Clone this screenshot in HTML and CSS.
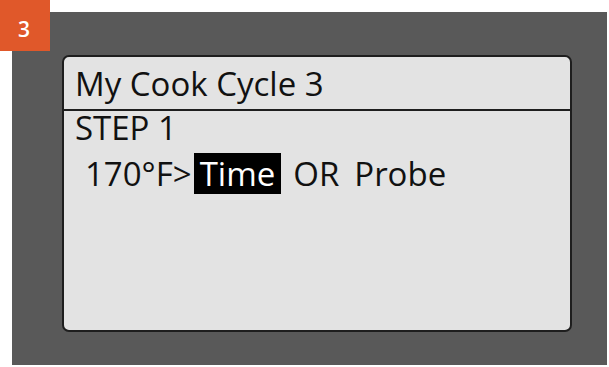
FILE: index.html
```html
<!DOCTYPE html>
<html>
<head>
<meta charset="utf-8">
<link rel="stylesheet" href="styles.css">
</head>
<body>
<div class="page">
  <div class="badge">3</div>
  <div class="frame">
    <div class="screen">
      <div class="header">My Cook Cycle 3</div>
      <div class="body">
        <div class="step">STEP 1</div>
        <div class="line"><span class="temp">170°F&gt;</span><span class="sel">Time</span><span class="or">OR</span><span class="probe">Probe</span></div>
      </div>
    </div>
  </div>
</div>
</body>
</html>
```
FILE: styles.css
```css
html, body {
  margin: 0;
  padding: 0;
  background: #ffffff;
}
.page {
  position: relative;
  width: 609px;
  height: 367px;
  box-sizing: border-box;
  padding: 12px 0 0 12px;
  font-family: "Open Sans", "DejaVu Sans", sans-serif;
}
.badge {
  position: absolute;
  left: 0;
  top: 0;
  width: 50px;
  height: 51px;
  background: #e0582a;
  color: #ffffff;
  font-size: 21px;
  font-weight: 600;
  line-height: 1;
  padding: 19px 0 0 18px;
  box-sizing: border-box;
}
.frame {
  width: 595px;
  height: 353px;
  background: #595959;
  box-sizing: border-box;
  padding: 43px 35px 33px 50px;
}
.screen {
  height: 100%;
  box-sizing: border-box;
  background: #e3e3e3;
  border: 2px solid #1e1e1e;
  border-radius: 7px;
}
.header {
  height: 54px;
  box-sizing: border-box;
  border-bottom: 2px solid #1e1e1e;
  font-size: 33px;
  line-height: 1;
  color: #111;
  padding: 10px 0 0 11px;
}
.body {
  padding: 0 0 0 11px;
  color: #111;
  font-size: 33px;
  line-height: 1;
}
.step {
  height: 42px;
}
.line {
  padding-left: 10px;
  line-height: 41px;
  height: 41px;
}
.temp {
  margin-right: 2px;
}
.sel {
  display: inline-block;
  background: #000;
  color: #fff;
  padding: 0 6px;
}
.or {
  margin: 0 0 0 12px;
}
.probe {
  margin-left: 15px;
}
```
